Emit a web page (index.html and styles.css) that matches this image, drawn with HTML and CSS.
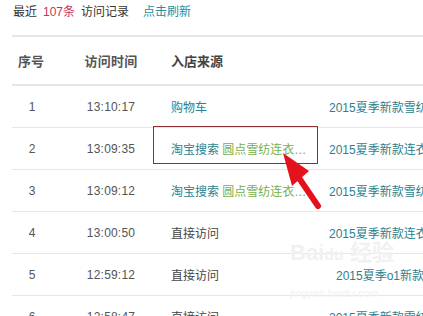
FILE: index.html
```html
<!DOCTYPE html>
<html lang="zh">
<head>
<meta charset="utf-8">
<link rel="stylesheet" href="styles.css">
</head>
<body>
<div class="page">
  <div class="summary">
    <span>最近</span>
    <span class="count">107条</span>
    <span>访问记录</span>
    <span class="refresh">点击刷新</span>
  </div>
  <div class="table">
    <div class="row head">
      <div class="c1">序号</div>
      <div class="c2">访问时间</div>
      <div class="c3">入店来源</div>
      <div class="c4"></div>
    </div>
    <div class="row">
      <div class="c1">1</div>
      <div class="c2">13:10:17</div>
      <div class="c3"><span class="link">购物车</span></div>
      <div class="c4"><span class="link">2015夏季新款雪纺连衣裙</span></div>
    </div>
    <div class="row">
      <div class="c1">2</div>
      <div class="c2">13:09:35</div>
      <div class="c3"><span class="link">淘宝搜索</span> <span class="kw">圆点雪纺连衣…</span></div>
      <div class="c4"><span class="link">2015夏季新款连衣裙</span></div>
    </div>
    <div class="row">
      <div class="c1">3</div>
      <div class="c2">13:09:12</div>
      <div class="c3"><span class="link">淘宝搜索</span> <span class="kw">圆点雪纺连衣…</span></div>
      <div class="c4"><span class="link">2015夏季新款雪纺连衣裙</span></div>
    </div>
    <div class="row">
      <div class="c1">4</div>
      <div class="c2">13:00:50</div>
      <div class="c3">直接访问</div>
      <div class="c4"><span class="link">2015夏季新款连衣裙</span></div>
    </div>
    <div class="row">
      <div class="c1">5</div>
      <div class="c2">12:59:12</div>
      <div class="c3">直接访问</div>
      <div class="c4 shift"><span class="link">2015夏季o1新款连衣裙</span></div>
    </div>
    <div class="row">
      <div class="c1">6</div>
      <div class="c2">12:58:47</div>
      <div class="c3">直接访问</div>
      <div class="c4"><span class="link">2015夏季新款雪纺连衣裙</span></div>
    </div>
  </div>
</div>
<div class="highlight"></div>
<svg class="arrow" width="423" height="316" viewBox="0 0 423 316">
  <line x1="318" y1="206" x2="299" y2="178" stroke="#e4121c" stroke-width="6" stroke-linecap="round"/>
  <polygon points="283,153 309,171 292,186" fill="#e4121c"/>
</svg>
<div class="watermark">
  <div class="wm-logo">Bai<span>du</span> 经验</div>
  <div class="wm-url">jingyan.baidu.com</div>
</div>
</body>
</html>
```

FILE: styles.css
```css
html, body {
  margin: 0;
  padding: 0;
  background: #ffffff;
  overflow: hidden;
}
body {
  width: 423px;
  height: 316px;
  position: relative;
  font-family: "Liberation Sans", "Noto Sans CJK SC", sans-serif;
  font-size: 12px;
  color: #444;
}
.page {
  padding-left: 12px;
}
.summary {
  display: flex;
  gap: 6px;
  height: 35px;
  padding-left: 1px;
  padding-top: 5px;
  box-sizing: border-box;
  line-height: 14px;
  color: #333;
}
.summary .count {
  color: #c3355a;
}
.summary .refresh {
  color: #2a8c9c;
  margin-left: 8px;
}
.table {
  border-top: 2px solid #e6e6e6;
}
.row {
  display: grid;
  grid-template-columns: 40px 118px 159px 1fr;
  height: 42px;
  box-sizing: border-box;
  align-items: center;
  border-bottom: 1px solid #e6e6e6;
  white-space: nowrap;
}
.row.head {
  height: 49px;
  border-bottom: 2px solid #e6e6e6;
  font-weight: bold;
  font-size: 13px;
  color: #444;
}
.row.head .c1 {
  padding-left: 6px;
  text-align: left;
}
.c1 {
  text-align: center;
  color: #555;
}
.c2 {
  text-align: center;
  color: #555;
  letter-spacing: 0.2px;
}
.c3 {
  padding-left: 1px;
  color: #444;
}
.c4 {
  overflow: hidden;
}
.c4.shift {
  padding-left: 7px;
}
.link {
  color: #2d7f8e;
}
.kw {
  color: #78b04e;
}
.highlight {
  position: absolute;
  left: 153px;
  top: 126px;
  width: 165px;
  height: 38px;
  box-sizing: border-box;
  border: 1.5px solid #8e2e33;
}
.arrow {
  position: absolute;
  left: 0;
  top: 0;
}
.watermark {
  position: absolute;
  left: 290px;
  top: 240px;
  color: #f1f1f1;
  pointer-events: none;
}
.wm-logo {
  font-size: 22px;
  font-weight: bold;
  line-height: 26px;
}
.wm-logo span {
  font-size: 16px;
}
.wm-url {
  font-size: 11px;
  line-height: 14px;
  margin-top: 18px;
}
```
